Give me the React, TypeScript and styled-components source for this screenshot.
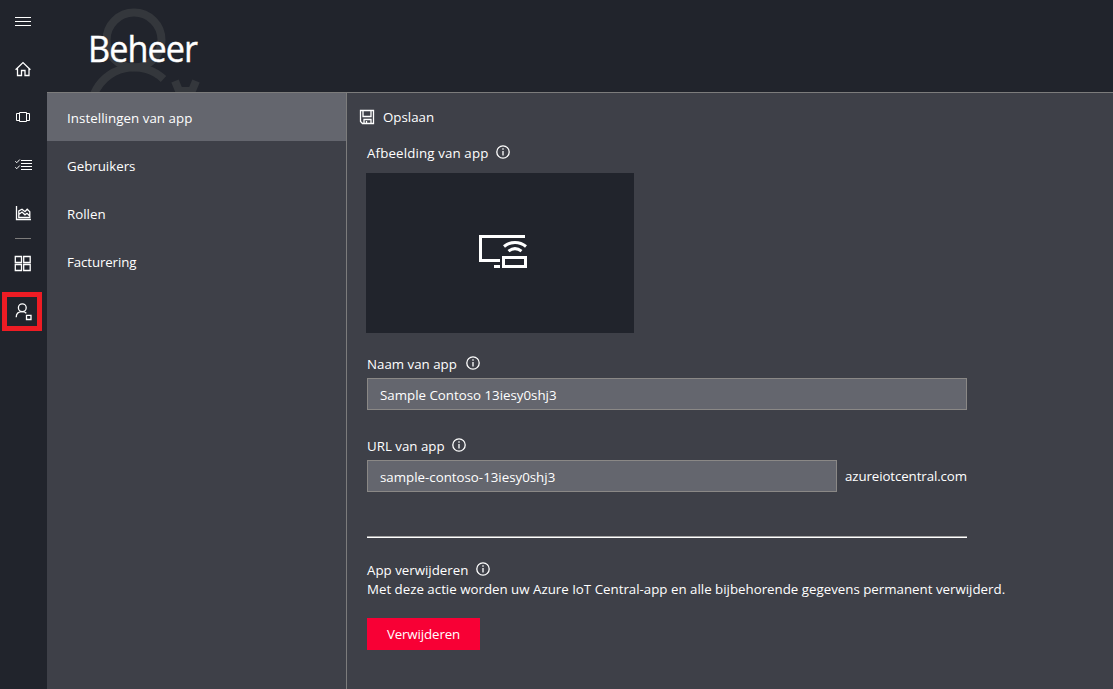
import React from 'react';
import styled, { createGlobalStyle } from 'styled-components';

const GlobalStyle = createGlobalStyle`
  * { box-sizing: border-box; }
  body {
    margin: 0;
    background: #3e4048;
    color: #fff;
    font-family: 'Open Sans', 'Noto Sans', sans-serif;
    font-size: 13.3px;
    line-height: 20px;
  }
`;

const Shell = styled.div`
  display: flex;
  width: 100%;
  height: 689px;
  overflow: hidden;
`;

const Rail = styled.nav`
  flex: 0 0 47px;
  display: flex;
  flex-direction: column;
  background: #21242c;
`;

const RailButton = styled.a<{ $height?: number }>`
  position: relative;
  display: flex;
  align-items: flex-end;
  height: ${p => p.$height ?? 48}px;
  padding: 0 0 12px 11px;
`;

const RailDivider = styled.div`
  height: 1px;
  width: 16px;
  margin: 1px 0 0 15px;
  background: #7d7c7b;
`;

const Highlight = styled.span`
  position: absolute;
  left: 2px;
  top: 5px;
  width: 40px;
  height: 39px;
  border: 5px solid #ee1c24;
`;

const Icon = styled.svg`
  display: block;
  flex: none;
  fill: none;
  stroke: #fff;
  stroke-width: 1.3;
`;

const Page = styled.div`
  flex: 1;
  display: flex;
  flex-direction: column;
  min-width: 0;
`;

const Header = styled.header`
  position: relative;
  height: 93px;
  padding: 24px 0 0 41px;
  background: #21242c;
  border-bottom: 1px solid #7c7c7c;
`;

const Watermark = styled.svg`
  position: absolute;
  left: 33px;
  top: 0;
`;

const Title = styled.h1`
  position: relative;
  margin: 0;
  font-size: 36px;
  line-height: 50px;
  font-weight: 400;
  letter-spacing: -1px;
  transform: scaleX(0.95);
  transform-origin: 0 0;
  -webkit-text-stroke: 0.4px #fff;
`;

const Body = styled.div`
  flex: 1;
  display: flex;
`;

const Menu = styled.nav`
  flex: 0 0 300px;
  border-right: 1px solid #7c7c7c;
`;

const MenuItem = styled.a<{ $active?: boolean }>`
  display: flex;
  align-items: center;
  height: 48px;
  padding: 1px 0 0 20px;
  background: ${p => (p.$active ? '#64666e' : 'transparent')};
`;

const Content = styled.main`
  flex: 1;
  padding: 14px 0 0 20px;
`;

const Text = styled.span<{ $track?: number }>`
  white-space: nowrap;
  letter-spacing: ${p => p.$track ?? 0}px;
`;

const SaveButton = styled.div`
  display: flex;
  align-items: center;
  gap: 8px;
  height: 20px;
  margin-left: -8px;
`;

const Label = styled.div<{ $top: number; $gap?: number }>`
  display: flex;
  align-items: flex-start;
  gap: ${p => p.$gap ?? 8}px;
  height: 20px;
  margin-top: ${p => p.$top}px;
`;

const Preview = styled.div`
  display: flex;
  align-items: center;
  justify-content: center;
  width: 268px;
  height: 160px;
  margin: 10px 0 0 -1px;
  padding: 0 0 2px 6px;
  background: #21242c;
`;

const FieldRow = styled.div`
  display: flex;
  align-items: center;
  gap: 8px;
  margin-top: 4px;
`;

const Field = styled.div<{ $width: number }>`
  display: flex;
  align-items: center;
  width: ${p => p.$width}px;
  height: 32px;
  padding: 2px 12px 0;
  background: #64666e;
  border: 1px solid #8a8886;
`;

const Rule = styled.div`
  width: 600px;
  height: 2px;
  margin-top: 44px;
  background: #fff;
  border-top: 1px solid #a3a3a3;
`;

const Description = styled.p`
  margin: -1px 0 0;
`;

const DeleteButton = styled.div`
  display: flex;
  align-items: center;
  justify-content: center;
  width: 113px;
  height: 32px;
  margin-top: 19px;
  background: #f80035;
`;

const Info = () => (
  <Icon width="14" height="18" viewBox="0 0 14 18">
    <circle cx="7" cy="9" r="6.2" />
    <path d="M7 8v4.5M7 5.3v1.4" />
  </Icon>
);

const RailIcon = ({ children }: { children: React.ReactNode }) => (
  <Icon width="24" height="24" viewBox="0 0 24 24">{children}</Icon>
);

export default function App() {
  return (
    <>
      <GlobalStyle />
      <Shell>
        <Rail>
          <RailButton $height={45}>
            <RailIcon><path strokeWidth="1" d="M4 8.5h16M4 12.5h16M4 16.5h16" /></RailIcon>
          </RailButton>
          <RailButton>
            <RailIcon><path d="M4.6 12.8L12 5.6l7.4 7.2M6.5 11.5v7h4v-5h3.5v5h4v-7" /></RailIcon>
          </RailButton>
          <RailButton>
            <RailIcon><path strokeWidth="1" d="M8.5 7.5h7v9h-7zM8 8.5H5.5v7H8M16 8.5h2.5v7H16" /></RailIcon>
          </RailButton>
          <RailButton>
            <RailIcon>
              <g strokeWidth="1">
                <path d="M10 7.5h11M10 10.500h11M10 13.500h11M10 16.500h11" />
                <path d="M4.300 8.300l1.500 1.400 3-3.200M4.300 14.300l1.500 1.400 3-3.200" />
              </g>
            </RailIcon>
          </RailButton>
          <RailButton>
            <RailIcon>
              <path d="M5.500 5v13.500H20" />
              <path d="M7.800 16.500V9.800l3.200-1.600 3 2.500 2.200-2.500 2.600 2.500v5.800zM7.800 13.500l3.200-2.500 3 2.800 2-1.500 3 3" />
            </RailIcon>
          </RailButton>
          <RailDivider />
          <RailButton>
            <RailIcon><path d="M4.300 5.500h6.200v6H4.300zM12.700 5.500h6.500v6h-6.500zM4.300 13.500h6.200v6H4.300zM12.700 13.500h6.500v6h-6.500z" /></RailIcon>
          </RailButton>
          <RailButton>
            <RailIcon>
              <circle cx="11.300" cy="8.800" r="3.900" />
              <path d="M5.200 18.300c0-3.500 2.400-5.600 6.100-5.600 1.700 0 3 .6 4 1.600M15.500 16.300h4.500v4.200h-4.500z" />
            </RailIcon>
            <Highlight />
          </RailButton>
        </Rail>
        <Page>
          <Header>
            <Watermark width="130" height="92" viewBox="80 0 130 92" fill="none" stroke="#34373c" strokeWidth="8">
              <circle cx="134" cy="40" r="27.500" />
              <path d="M94 94A43.300 43.300 0 0 1 163.500 79" />
              <path d="M175 81l5 12M196 81l-5 12M178 91h16" />
            </Watermark>
            <Title>Beheer</Title>
          </Header>
          <Body>
            <Menu>
              <MenuItem $active><Text $track={0.06}>Instellingen van app</Text></MenuItem>
              <MenuItem><Text>Gebruikers</Text></MenuItem>
              <MenuItem><Text>Rollen</Text></MenuItem>
              <MenuItem><Text $track={-0.12}>Facturering</Text></MenuItem>
            </Menu>
            <Content>
              <SaveButton>
                <Icon width="16" height="16" viewBox="0 0 16 16">
                  <path d="M1.500 1.500h13v13H3.500l-2-2zM4 1.500v6h8v-6M5 14.500v-4h7v4M7.500 12v2.500" />
                </Icon>
                <Text>Opslaan</Text>
              </SaveButton>
              <Label $top={16}><Text $track={0.14}>Afbeelding van app</Text><Info /></Label>
              <Preview>
                <Icon width="50" height="36" viewBox="478 234 50 36">
                  <g strokeWidth="3">
                    <path d="M525 236.500H480.500V260.500H500M494 266.500h6M503.500 257.500h22v9h-22z" />
                    <path d="M504 246.500c6.500-5.500 15.500-5.500 22 0M508.500 251.200c4-3.200 9-3.200 13 0" />
                  </g>
                </Icon>
              </Preview>
              <Label $top={21} $gap={9}><Text>Naam van app</Text><Info /></Label>
              <FieldRow><Field $width={600}><Text>Sample Contoso 13iesy0shj3</Text></Field></FieldRow>
              <Label $top={26} $gap={7}><Text>URL van app</Text><Info /></Label>
              <FieldRow>
                <Field $width={470}><Text>sample-contoso-13iesy0shj3</Text></Field>
                <Text $track={-0.1}>azureiotcentral.com</Text>
              </FieldRow>
              <Rule />
              <Label $top={22} $gap={7.500}><Text>App verwijderen</Text><Info /></Label>
              <Description>
                <Text>Met deze actie worden uw Azure IoT Central-app en alle bijbehorende gegevens permanent verwijderd.</Text>
              </Description>
              <DeleteButton><Text $track={-0.12}>Verwijderen</Text></DeleteButton>
            </Content>
          </Body>
        </Page>
      </Shell>
    </>
  );
}
